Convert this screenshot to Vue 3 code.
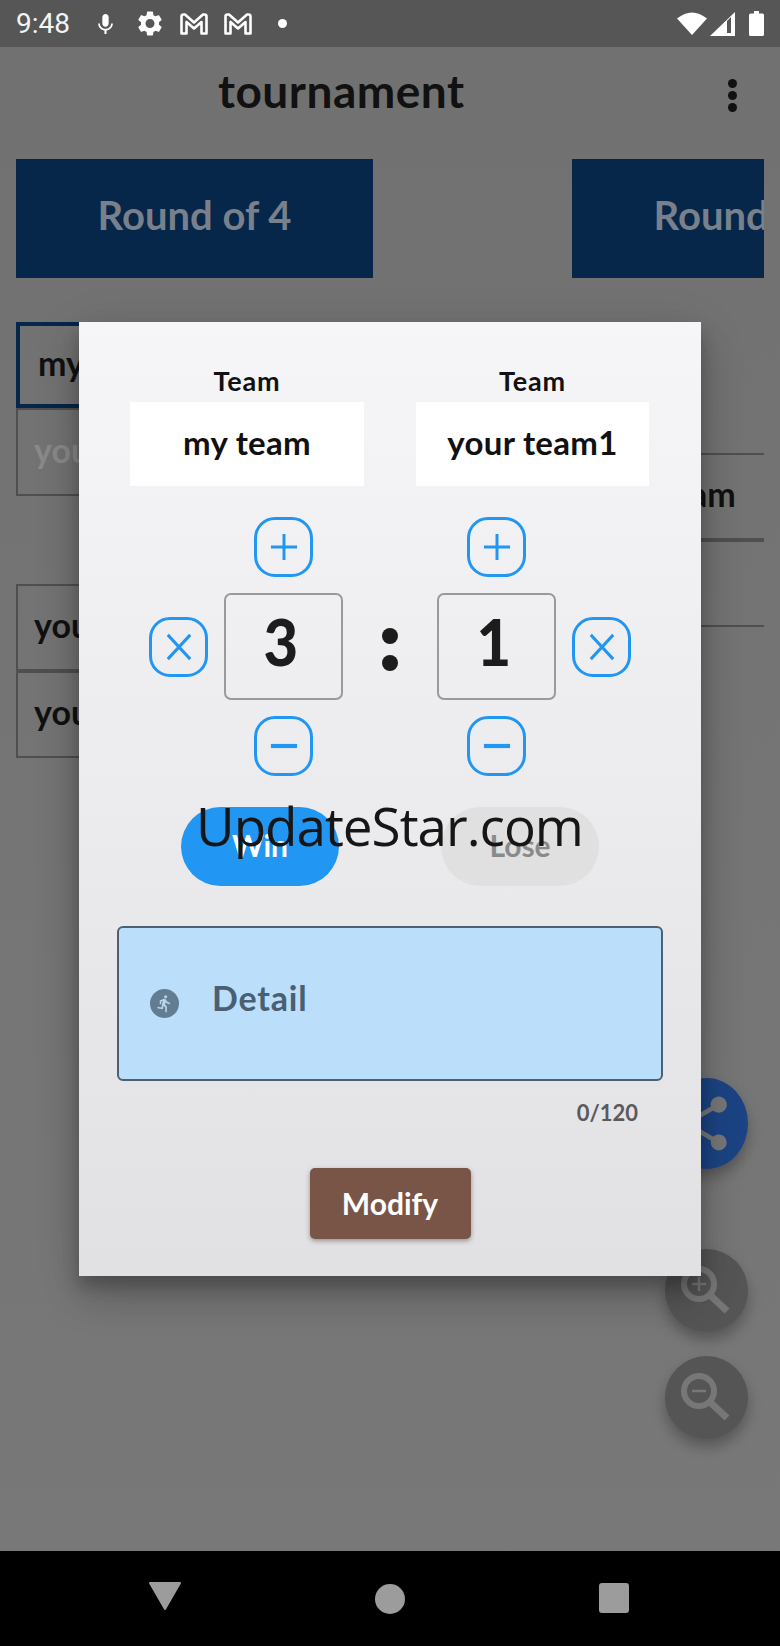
<script setup>
const tiles = ['Round of 4', 'Round of 2']
</script>

<template>
  <div class="screen">
    <header class="status">
      <span class="clock">9:48</span>
      <svg class="ic-mic" viewBox="5 2 14 19"><path fill="#fff" d="M12 14c1.66 0 2.99-1.34 2.99-3L15 5c0-1.66-1.34-3-3-3S9 3.34 9 5v6c0 1.66 1.34 3 3 3zm5.3-3c0 3-2.54 5.1-5.3 5.1S6.7 14 6.7 11H5c0 3.41 2.72 6.23 6 6.72V21h2v-3.28c3.28-.48 6-3.3 6-6.72h-1.7z"/></svg>
      <svg class="ic-gear" viewBox="2.4 2 19.2 20"><path fill="#fff" d="M19.14 12.94c.04-.3.06-.61.06-.94 0-.32-.02-.64-.07-.94l2.03-1.58c.18-.14.23-.41.12-.61l-1.92-3.32c-.12-.22-.37-.29-.59-.22l-2.39.96c-.5-.38-1.03-.7-1.62-.94l-.36-2.54c-.04-.24-.24-.41-.48-.41h-3.84c-.24 0-.43.17-.47.41l-.36 2.54c-.59.24-1.13.57-1.62.94l-2.39-.96c-.22-.08-.47 0-.59.22L2.74 8.87c-.12.21-.08.47.12.61l2.03 1.58c-.05.3-.09.63-.09.94s.02.64.07.94l-2.03 1.58c-.18.14-.23.41-.12.61l1.92 3.32c.12.22.37.29.59.22l2.39-.96c.5.38 1.03.7 1.62.94l.36 2.54c.05.24.24.41.48.41h3.84c.24 0 .44-.17.47-.41l.36-2.54c.59-.24 1.13-.56 1.62-.94l2.39.96c.22.08.47 0 .59-.22l1.92-3.32c.12-.22.07-.47-.12-.61l-2.01-1.58zM12 15.6c-1.98 0-3.6-1.62-3.6-3.6s1.62-3.6 3.6-3.6 3.6 1.62 3.6 3.6-1.62 3.6-3.6 3.6z"/></svg>
      <svg class="ic-m" viewBox="0 0 28 22"><path fill="none" stroke="#fff" stroke-width="2.600" stroke-linejoin="round" d="M1.5 20.5V3.5q0-2 2-2h1.5L14 9.5l9-8h1.500q2 0 2 2v17h-5V9l-7.500 6.500L6.500 9v11.500z"/></svg>
      <svg class="ic-m second" viewBox="0 0 28 22"><path fill="none" stroke="#fff" stroke-width="2.600" stroke-linejoin="round" d="M1.5 20.5V3.5q0-2 2-2h1.5L14 9.5l9-8h1.500q2 0 2 2v17h-5V9l-7.500 6.500L6.500 9v11.500z"/></svg>
      <span class="dot"></span>
      <span class="grow"></span>
      <svg class="ic-wifi" viewBox="0 0 30 23"><path fill="#fff" d="M15 23 0 6.500Q15-5.500 30 6.500Z"/></svg>
      <svg class="ic-signal" viewBox="0 0 25 24"><path fill="#fff" d="M0 24 25 0v24z"/><path fill="#565656" d="M17 9l4-4v16h-4z"/></svg>
      <svg class="ic-batt" viewBox="0 0 15 25"><path fill="#fff" d="M5 0h5v2.500h3.500q1.500 0 1.500 1.500v19.500q0 1.500-1.500 1.500h-12Q0 25 0 23.500V4q0-1.500 1.500-1.500H5z"/></svg>
    </header>

    <main class="main">
      <div class="appbar">
        <h1 class="title">tournament</h1>
        <div class="menu"><i></i><i></i><i></i></div>
      </div>

      <div class="bracket">
        <div class="col">
          <div class="tile">{{ tiles[0] }}</div>
          <div class="match first">
            <div class="cell picked">my team</div>
            <div class="cell faded">your team1</div>
          </div>
          <div class="match second-match">
            <div class="cell">your team2</div>
            <div class="cell">your team3</div>
          </div>
        </div>
        <div class="col">
          <div class="tile">{{ tiles[1] }}</div>
          <div class="match final">
            <div class="cell">your team</div>
            <div class="cell"></div>
          </div>
        </div>
      </div>

      <button class="fab share">
        <svg viewBox="0 0 24 24"><path fill="#777" d="M18 16.080c-.76 0-1.440.3-1.960.77L8.910 12.700c.05-.23.09-.46.09-.7s-.04-.47-.09-.7l7.050-4.110c.54.5 1.250.81 2.040.81 1.660 0 3-1.340 3-3s-1.340-3-3-3-3 1.340-3 3c0 .24.04.47.09.7L8.040 9.810C7.500 9.310 6.790 9 6 9c-1.660 0-3 1.340-3 3s1.340 3 3 3c.79 0 1.500-.31 2.040-.81l7.120 4.160c-.05.21-.08.43-.08.65 0 1.610 1.310 2.920 2.920 2.920 1.610 0 2.920-1.310 2.920-2.920s-1.310-2.920-2.920-2.920z"/></svg>
      </button>
      <button class="fab zoom zoom-in">
        <svg viewBox="0 0 83 83"><g fill="none" stroke="#777" stroke-width="6"><circle cx="34" cy="35" r="15"/><path d="M46 47 62 62" stroke-width="7"/><path d="M27 35h14M34 28v14" stroke-width="2.500"/></g></svg>
      </button>
      <button class="fab zoom zoom-out">
        <svg viewBox="0 0 83 83"><g fill="none" stroke="#777" stroke-width="6"><circle cx="34" cy="35" r="15"/><path d="M46 47 62 62" stroke-width="7"/><path d="M27 35h14" stroke-width="2.500"/></g></svg>
      </button>

      <section class="modal">
        <div class="teams">
          <div class="team">
            <div class="team-label">Team</div>
            <div class="team-name">my team</div>
          </div>
          <div class="team">
            <div class="team-label">Team</div>
            <div class="team-name">your team1</div>
          </div>
        </div>

        <div class="score">
          <button class="step s-plus-a"><svg viewBox="0 0 30 30"><path d="M15 1v28M1 15h28" /></svg></button>
          <button class="step s-plus-b"><svg viewBox="0 0 30 30"><path d="M15 1v28M1 15h28" /></svg></button>
          <button class="step s-x-a"><svg viewBox="0 0 30 30"><path d="M3 2l24 26M27 2 3 28" /></svg></button>
          <div class="num s-num-a"><span>3</span></div>
          <div class="colon"><i></i><i></i></div>
          <div class="num s-num-b"><span>1</span></div>
          <button class="step s-x-b"><svg viewBox="0 0 30 30"><path d="M3 2l24 26M27 2 3 28" /></svg></button>
          <button class="step s-minus-a"><svg viewBox="0 0 30 30"><path class="thick" d="M1 15h28" /></svg></button>
          <button class="step s-minus-b"><svg viewBox="0 0 30 30"><path class="thick" d="M1 15h28" /></svg></button>
        </div>

        <div class="result">
          <button class="pill win">Win</button>
          <button class="pill lose">Lose</button>
        </div>

        <div class="detail">
          <span class="detail-icon">
            <svg viewBox="0 0 24 24"><path fill="#bcd4e6" d="M13.490 5.480c1.100 0 2-.9 2-2s-.9-2-2-2-2 .9-2 2 .9 2 2 2zm-3.600 13.900l1-4.400 2.100 2v6h2v-7.500l-2.100-2 .6-3c1.300 1.500 3.300 2.500 5.500 2.500v-2c-1.900 0-3.500-1-4.300-2.400l-1-1.600c-.4-.6-1-1-1.700-1-.3 0-.5.1-.8.1l-5.200 2.200v4.700h2v-3.400l1.800-.7-1.600 8.100-4.900-1-.4 2 7 1.400z"/></svg>
          </span>
          <span class="detail-text">Detail</span>
        </div>
        <div class="counter">0/120</div>
        <button class="modify">Modify</button>
      </section>

      <div class="watermark">UpdateStar.com</div>
    </main>

    <footer class="nav">
      <svg class="nav-back" viewBox="0 0 32 28"><path fill="#9c9c9c" stroke="#9c9c9c" stroke-width="2" stroke-linejoin="round" d="M1 1h30L16 27z"/></svg>
      <span class="nav-home"></span>
      <span class="nav-recent"></span>
    </footer>
  </div>
</template>

<style scoped>
.screen {
  width: 780px;
  height: 1646px;
  display: flex;
  flex-direction: column;
  overflow: hidden;
  position: relative;
  font-family: Lato, "Noto Sans", sans-serif;
  background: #737373;
}
button { font-family: inherit; border: 0; padding: 0; }

.status {
  height: 47px;
  flex: none;
  display: flex;
  align-items: center;
  background: #565656;
  padding: 0 16px;
  color: #fff;
}
.clock { font: 400 28px/1 Roboto, sans-serif; width: 54px; color: #f4f4f4; }
.ic-mic { width: 15px; height: 20px; margin-left: 28px; }
.ic-gear { width: 24px; height: 25px; margin-left: 25px; }
.ic-m { width: 28px; height: 22px; margin-left: 18px; }
.ic-m.second { margin-left: 16px; }
.dot { width: 9px; height: 9px; border-radius: 50%; background: #fff; margin-left: 26px; }
.grow { flex: 1; }
.ic-wifi { width: 30px; height: 23px; }
.ic-signal { width: 25px; height: 24px; margin-left: 3px; }
.ic-batt { width: 15px; height: 25px; margin-left: 14px; }

.main { flex: 1; position: relative; background: linear-gradient(#717171, #787878); overflow: hidden; }

.appbar {
  height: 112px;
  display: flex;
  align-items: center;
  justify-content: space-between;
  padding: 0 43px 26px 218px;
  box-sizing: border-box;
}
.title { margin: 0; font-size: 46px; font-weight: 700; color: #111; letter-spacing: .5px; }
.menu { display: flex; flex-direction: column; gap: 3px; margin-top: 11px; }
.menu i { width: 9px; height: 9px; border-radius: 50%; background: #111; display: block; }

.bracket { display: flex; gap: 199px; margin: 0 16px; overflow: hidden; }
.col { flex: 0 0 357px; display: flex; flex-direction: column; }
.tile {
  height: 119px;
  background: #06264a;
  color: #78818b;
  font-size: 40px;
  font-weight: 700;
  display: flex;
  align-items: center;
  justify-content: center;
  padding-bottom: 8px;
  box-sizing: border-box;
}
.match { display: flex; flex-direction: column; }
.match.first { margin-top: 44px; }
.match.second-match { margin-top: 88px; }
.match.final { margin-top: 175px; }
.cell {
  height: 87px;
  box-sizing: border-box;
  border: 2px solid #4f4f4f;
  color: #111;
  font-size: 34px;
  font-weight: 700;
  display: flex;
  align-items: center;
  padding: 0 0 6px 16px;
}
.cell.picked { height: 86px; border: 4px solid #06264a; padding-left: 18px; }
.cell.faded { height: 88px; color: #8a8a8a; }
.final .cell { padding-left: 9px; }

.fab { position: absolute; left: 665px; width: 83px; border-radius: 50%; box-shadow: 0 8px 14px rgba(0,0,0,.28); display: flex; align-items: center; justify-content: center; }
.share { top: 1031px; height: 91px; background: #1c4484; }
.share svg { width: 65px; height: 65px; margin-left: -9px; }
.zoom { height: 83px; background: #555; }
.zoom svg { width: 83px; height: 83px; display: block; }
.zoom-in { top: 1202px; }
.zoom-out { top: 1309px; }

.modal {
  position: absolute;
  left: 79px;
  top: 275px;
  width: 622px;
  height: 954px;
  box-sizing: border-box;
  padding-top: 46px;
  background: linear-gradient(#f6f6f9, #e1e1e4);
  box-shadow: 0 24px 38px rgba(0,0,0,.14), 0 9px 46px rgba(0,0,0,.12), 0 11px 15px rgba(0,0,0,.2);
  display: flex;
  flex-direction: column;
  align-items: center;
}
.teams { display: grid; grid-template-columns: 234px 233px; gap: 52px; margin-left: -1px; }
.team-label { font-size: 27px; line-height: 26px; font-weight: 700; color: #111; text-align: center; margin-bottom: 8px; letter-spacing: .8px; }
.team-name {
  height: 84px;
  background: #fff;
  color: #111;
  font-size: 33px;
  font-weight: 700;
  display: flex;
  align-items: center;
  justify-content: center;
  padding-bottom: 4px;
  box-sizing: border-box;
  letter-spacing: .3px;
}

.score {
  margin-top: 31px;
  display: grid;
  grid-template-columns: 59px 119px 62px 119px 59px;
  grid-template-rows: 60px 107px 60px;
  gap: 16px;
}
.step {
  width: 59px;
  height: 60px;
  box-sizing: border-box;
  border: 3.5px solid #2196f3;
  border-radius: 21px;
  background: transparent;
  display: flex;
  align-items: center;
  justify-content: center;
  justify-self: center;
  align-self: center;
}
.step svg { width: 28px; height: 28px; overflow: visible; }
.step path { fill: none; stroke: #2196f3; stroke-width: 3.2; }
.step path.thick { stroke-width: 4.500; }
.s-plus-a { grid-area: 1 / 2; }
.s-plus-b { grid-area: 1 / 4; }
.s-x-a { grid-area: 2 / 1; }
.s-num-a { grid-area: 2 / 2; }
.colon { grid-area: 2 / 3; }
.s-num-b { grid-area: 2 / 4; }
.s-x-b { grid-area: 2 / 5; }
.s-minus-a { grid-area: 3 / 2; }
.s-minus-b { grid-area: 3 / 4; }
.num {
  box-sizing: border-box;
  border: 2px solid #9a9a9c;
  border-radius: 7px;
  display: flex;
  align-items: center;
  justify-content: center;
  font-size: 65px;
  font-weight: 900;
  color: #1c1c1c;
}
.num span { display: block; margin: -12px 6px 0 0; transform: scaleX(.92); }
.colon { display: flex; flex-direction: column; align-items: center; gap: 11px; padding-top: 35px; }
.colon i { display: block; width: 16px; height: 16px; border-radius: 50%; background: #1c1c1c; }

.result { display: flex; gap: 102px; margin-top: 31px; margin-left: 0; }
.pill { width: 158px; height: 79px; border-radius: 40px; font-size: 30px; font-weight: 700; padding-bottom: 4px; }
.win { background: #2196f3; color: #fff; }
.lose { background: #e0e0e0; color: #8a8a8a; }

.detail {
  margin-top: 40px;
  width: 546px;
  height: 155px;
  box-sizing: border-box;
  background: #bbdefb;
  border: 2px solid #4b6070;
  border-radius: 6px;
  display: flex;
  align-items: center;
  padding-left: 31px;
  flex: none;
}
.detail-icon { width: 29px; height: 29px; border-radius: 50%; background: #627d92; display: flex; align-items: center; justify-content: center; }
.detail-icon svg { width: 19px; height: 19px; }
.detail-text { margin: 0 0 12px 33px; font-size: 34px; font-weight: 700; color: #4a5f72; letter-spacing: .8px; }
.counter { align-self: flex-end; margin: 18px 63px 0 0; font-size: 22px; line-height: 28px; font-weight: 700; color: #5a5a5c; }
.modify {
  margin-top: 41px;
  width: 161px;
  height: 71px;
  border-radius: 5px;
  background: #795548;
  color: #fff;
  font-size: 30px;
  font-weight: 700;
  padding-bottom: 2px;
  box-shadow: 0 2px 5px rgba(0,0,0,.35);
  flex: none;
}

.watermark {
  position: absolute;
  left: 196px;
  top: 746px;
  font-family: "Open Sans", sans-serif;
  font-size: 53px;
  line-height: 66px;
  letter-spacing: -1px;
  color: #161616;
  white-space: nowrap;
}

.nav {
  height: 95px;
  flex: none;
  background: #000;
  position: relative;
  display: flex;
  align-items: flex-start;
}
.nav-back { width: 32px; height: 28px; margin: 31px 0 0 149px; }
.nav-home { width: 30px; height: 30px; border-radius: 50%; background: #9c9c9c; margin: 33px 0 0 194px; }
.nav-recent { width: 30px; height: 30px; border-radius: 3px; background: #9c9c9c; margin: 32px 0 0 194px; }
</style>

<style>
html, body { margin: 0; padding: 0; background: #737373; }
</style>
